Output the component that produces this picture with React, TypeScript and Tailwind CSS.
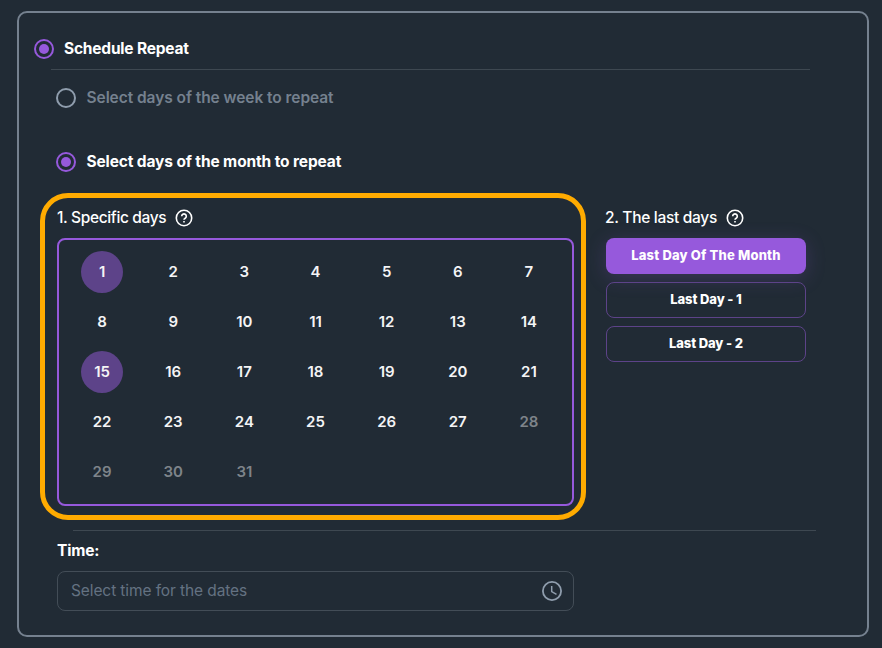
import React from "react";

function Radio({ checked }: { checked?: boolean }) {
  return (
    <span
      className={
        "flex size-5 shrink-0 items-center justify-center rounded-full border-2 " +
        (checked ? "border-[#9659dc]" : "border-[#8f9dad]")
      }
    >
      {checked && <span className="size-2.5 rounded-full bg-[#9659dc]" />}
    </span>
  );
}

function HelpIcon() {
  return (
    <svg className="size-[18px]" viewBox="0 0 18 18" fill="none" stroke="#fff">
      <circle cx="9" cy="9" r="7.7" strokeWidth="1.6" />
      <path d="M6.7 7.2a2.3 2.3 0 1 1 3.5 2c-.8.5-1.2.8-1.2 1.6" strokeWidth="1.6" />
      <path d="M9 11.9v1.6" strokeWidth="1.6" />
    </svg>
  );
}

function ClockIcon() {
  return (
    <svg className="size-5" viewBox="0 0 20 20" fill="none" stroke="#8f9dad">
      <circle cx="10" cy="10" r="9.1" strokeWidth="1.8" />
      <path d="M9.7 5v5.6l4.8 2.8" strokeWidth="1.5" />
    </svg>
  );
}

const days = Array.from({ length: 31 }, (_, i) => i + 1);
const selected = [1, 15];

export default function App() {
  return (
    <div className="h-[648px] w-[882px] bg-[#212b35] pt-[11px] pl-[17px] font-['Inter','Liberation_Sans',sans-serif] text-white">
      <div className="h-[626px] w-[852px] rounded-[10px] border-2 border-[#75818f] pt-[26px] pl-[15px]">
        <div className="flex h-5 items-center gap-2.5">
          <Radio checked />
          <span className="text-[15.5px] font-bold tracking-[-0.2px]">Schedule Repeat</span>
        </div>
        <div className="mt-[10px] ml-[17px] h-px w-[759px] bg-[#3e4851]" />

        <div className="ml-[22px]">
          <div className="mt-[18px] flex h-5 items-center gap-[10.5px]">
            <Radio />
            <span className="text-[15.5px] font-semibold tracking-[-0.06px] text-[#75818f]">
              Select days of the week to repeat
            </span>
          </div>
          <div className="mt-11 flex h-5 items-center gap-[10.5px]">
            <Radio checked />
            <span className="text-[15.5px] font-bold tracking-[-0.13px]">
              Select days of the month to repeat
            </span>
          </div>
        </div>

        <div className="mt-[36px] ml-[23px] flex gap-8">
          <section className="relative w-[517px]">
            <div className="pointer-events-none absolute -top-[15px] -left-[17px] h-[327px] w-[546px] rounded-[28px] border-5 border-[#ffab00]" />
            <h3 className="flex h-[19px] items-center gap-[9px] text-[15.5px] font-medium tracking-[-0.35px]">
              1. Specific days
              <HelpIcon />
            </h3>
            <div className="mt-[11px] grid h-[268px] grid-cols-7 grid-rows-5 rounded-lg border-2 border-[#9659dc] px-[7.5px] py-[7px]">
              {days.map((d) => (
                <div key={d} className="flex items-center justify-center">
                  <span
                    className={
                      "flex size-[42px] items-center justify-center rounded-full text-[15px] font-semibold " +
                      (selected.includes(d) ? "bg-[#5d4389] " : "") +
                      (d > 27 ? "text-[#7e848a]" : "text-[#f4f4f5]")
                    }
                  >
                    {d}
                  </span>
                </div>
              ))}
            </div>
          </section>

          <section className="w-[200px]">
            <h3 className="-ml-px flex h-[19px] items-center gap-[9px] text-[15.5px] font-medium tracking-[-0.3px]">
              2. The last days
              <HelpIcon />
            </h3>
            <div className="mt-[11px] flex flex-col gap-2 text-[13px] font-extrabold tracking-[-0.1px]">
              <button className="h-9 rounded-lg bg-[#9659dc] tracking-[0.18px] shadow-[0_4px_20px_rgba(150,89,220,0.22)]">
                Last Day Of The Month
              </button>
              <button className="h-9 rounded-lg border border-[#5d4389]">Last Day - 1</button>
              <button className="h-9 rounded-lg border border-[#5d4389]">Last Day - 2</button>
            </div>
          </section>
        </div>

        <div className="mt-6 ml-[39px] h-px w-[743px] bg-[#3e4851]" />
        <div className="mt-[10px] ml-[23px] flex h-5 items-center text-[15.5px] font-bold tracking-[-0.15px]">
          Time:
        </div>
        <div className="mt-[10px] ml-[23px] flex h-10 w-[517px] items-center justify-between rounded-lg border border-[#434d57] pr-[11px] pl-[13px]">
          <span className="text-[15.5px] tracking-[-0.1px] text-[#647282]">Select time for the dates</span>
          <ClockIcon />
        </div>
      </div>
    </div>
  );
}
